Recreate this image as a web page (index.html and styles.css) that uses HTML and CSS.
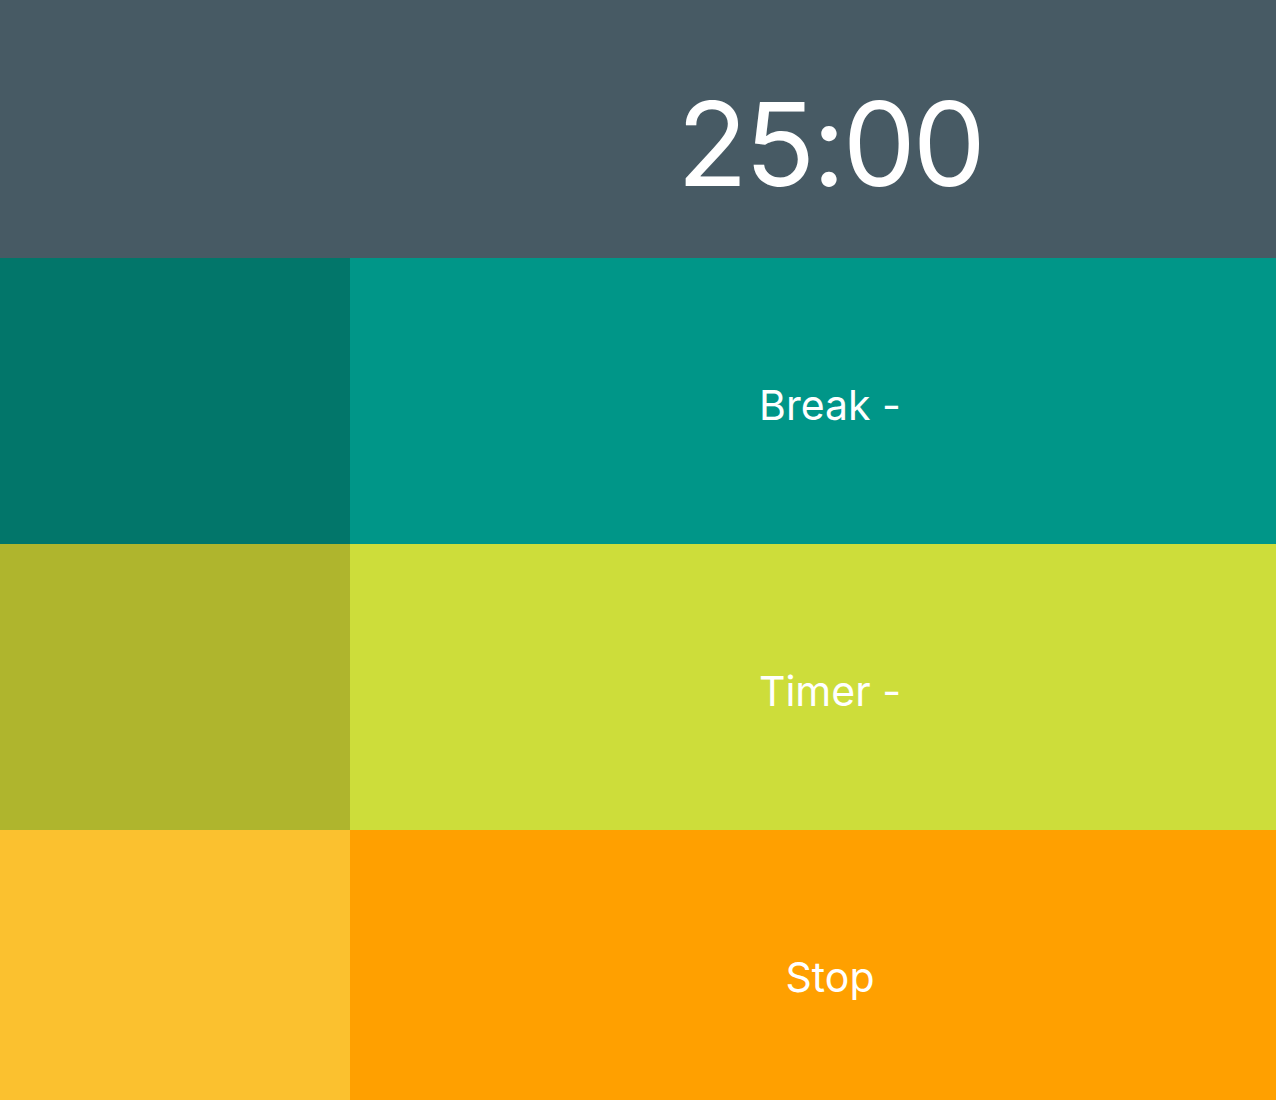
FILE: index.html
```html
<!DOCTYPE html>
<html>
<head>
<meta charset="utf-8">
<link rel="stylesheet" href="styles.css">
</head>
<body>
<div class="app">
  <div class="row header">
    <div class="side"></div>
    <div class="main"><span class="clock">25:00</span></div>
  </div>
  <div class="row break">
    <div class="side"></div>
    <div class="main"><span class="label">Break -</span></div>
  </div>
  <div class="row timer">
    <div class="side"></div>
    <div class="main"><span class="label">Timer -</span></div>
  </div>
  <div class="row stop">
    <div class="side"></div>
    <div class="main"><span class="label">Stop</span></div>
  </div>
</div>
</body>
</html>
```
FILE: styles.css
```css
html, body {
  margin: 0;
  padding: 0;
  overflow: hidden;
}
body {
  font-family: Inter, "Liberation Sans", sans-serif;
  color: #ffffff;
}
.app {
  display: flex;
  flex-direction: column;
}
.row {
  display: flex;
  height: 286px;
}
.side {
  width: 350px;
  flex: none;
}
.main {
  flex: 1;
  display: flex;
  align-items: center;
  justify-content: center;
  padding-left: 34px;
}
.header {
  height: 258px;
  background: #475a64;
}
.header .main {
  padding-top: 30px;
  box-sizing: border-box;
}
.clock {
  font-size: 116px;
  font-weight: 400;
  letter-spacing: -3px;
}
.label {
  font-size: 41px;
  padding-top: 8px;
}
.break .side { background: #02766a; }
.break .main { background: #009688; }
.timer .side { background: #afb52d; }
.timer .main { background: #cddd3a; }
.stop .side { background: #fbc12f; }
.stop .main { background: #ffa000; }
```
